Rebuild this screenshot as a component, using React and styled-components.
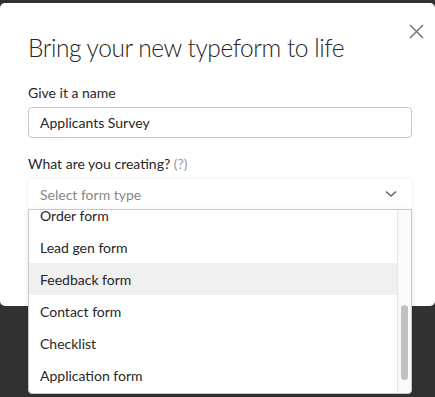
import React from 'react'
import styled, { createGlobalStyle } from 'styled-components'

const GlobalStyle = createGlobalStyle`
    html, body {
        margin: 0;
        padding: 0;
        background: #323232;
        font-family: Lato, "Liberation Sans", Arial, sans-serif;
        color: #262627;
    }
`

const StyledPage = styled.div`
    height: 397px;
    padding-top: 3px;
    box-sizing: border-box;
    overflow: hidden;
`

const StyledModal = styled.div`
    position: relative;
    background: #fff;
    height: 303px;
    border-radius: 5px;
    padding: 0 23px 0 28px;
    box-sizing: border-box;
`

const StyledClose = styled.button`
    position: absolute;
    top: 17px;
    right: 8px;
    width: 22px;
    height: 22px;
    padding: 0;
    border: none;
    background: none;
    display: flex;
    align-items: center;
    justify-content: center;
    cursor: pointer;
`

const StyledTitle = styled.h1`
    margin: 0;
    padding-top: 30px;
    font-size: 24.5px;
    line-height: 30px;
    font-weight: 300;
    letter-spacing: -0.45px;
`

const StyledLabel = styled.label`
    display: block;
    font-size: 14px;
    line-height: 18px;
    margin-top: ${(p) => p.$top}px;
    margin-bottom: ${(p) => p.$bottom}px;
`

const StyledHint = styled.span`
    color: #999;
`

const StyledInput = styled.div`
    height: 31px;
    box-sizing: border-box;
    border: 1px solid #c6c6c6;
    border-radius: 4px;
    padding: 0 11px;
    display: flex;
    align-items: center;
    font-size: 14px;
`

const StyledDropdown = styled.div`
    position: relative;
`

const StyledSelect = styled.div`
    height: 30px;
    box-sizing: border-box;
    border-radius: 4px 4px 0 0;
    box-shadow: 0 0 3px rgba(0, 0, 0, 0.12);
    padding: 0 15px 0 12px;
    display: flex;
    align-items: center;
    justify-content: space-between;
    font-size: 14px;
    color: #888;
`

const StyledMenu = styled.div`
    position: absolute;
    top: 30px;
    left: 0;
    right: 0;
    height: 185px;
    background: #fff;
    border: 1px solid #c8c8c8;
    border-radius: 0 0 4px 4px;
    box-sizing: border-box;
    display: flex;
    overflow: hidden;
    box-shadow: 0 2px 6px rgba(0, 0, 0, 0.1);
`

const StyledOptions = styled.ul`
    flex: 1;
    margin: -11px 0 0;
    padding: 0;
    list-style: none;
`

const StyledOption = styled.li`
    height: 32px;
    display: flex;
    align-items: center;
    padding-left: 11px;
    font-size: 14px;
    color: #262627;
    background: ${(p) => (p.$active ? '#f0f0f0' : 'transparent')};
`

const StyledTrack = styled.div`
    width: 14px;
    flex-shrink: 0;
    background: #fafafa;
    border-left: 1px solid #e6e6e6;
    box-sizing: border-box;
    padding: 95px 3px 0 3px;
`

const StyledThumb = styled.div`
    height: 75px;
    border-radius: 4px;
    background: #c1c1c1;
`

const options = ['Order form', 'Lead gen form', 'Feedback form', 'Contact form', 'Checklist', 'Application form']

const App = () => {
    return (
        <>
            <GlobalStyle />
            <StyledPage>
                <StyledModal>
                    <StyledClose aria-label="Close">
                        <svg width="15" height="15" viewBox="0 0 15 15">
                            <path d="M1 1L14 14M14 1L1 14" stroke="#7a7a7a" strokeWidth="1.6" />
                        </svg>
                    </StyledClose>
                    <StyledTitle>Bring your new typeform to life</StyledTitle>
                    <StyledLabel $top={21} $bottom={5}>Give it a name</StyledLabel>
                    <StyledInput>Applicants Survey</StyledInput>
                    <StyledLabel $top={17} $bottom={6}>
                        What are you creating? <StyledHint>(?)</StyledHint>
                    </StyledLabel>
                    <StyledDropdown>
                        <StyledSelect>
                            Select form type
                            <svg width="12" height="8" viewBox="0 0 12 8">
                                <path d="M1 1.5L6 6L11 1.5" stroke="#666" strokeWidth="1.6" fill="none" />
                            </svg>
                        </StyledSelect>
                        <StyledMenu>
                            <StyledOptions>
                                {options.map((o) => (
                                    <StyledOption key={o} $active={o === 'Feedback form'}>
                                        {o}
                                    </StyledOption>
                                ))}
                            </StyledOptions>
                            <StyledTrack>
                                <StyledThumb />
                            </StyledTrack>
                        </StyledMenu>
                    </StyledDropdown>
                </StyledModal>
            </StyledPage>
        </>
    )
}

export default App
